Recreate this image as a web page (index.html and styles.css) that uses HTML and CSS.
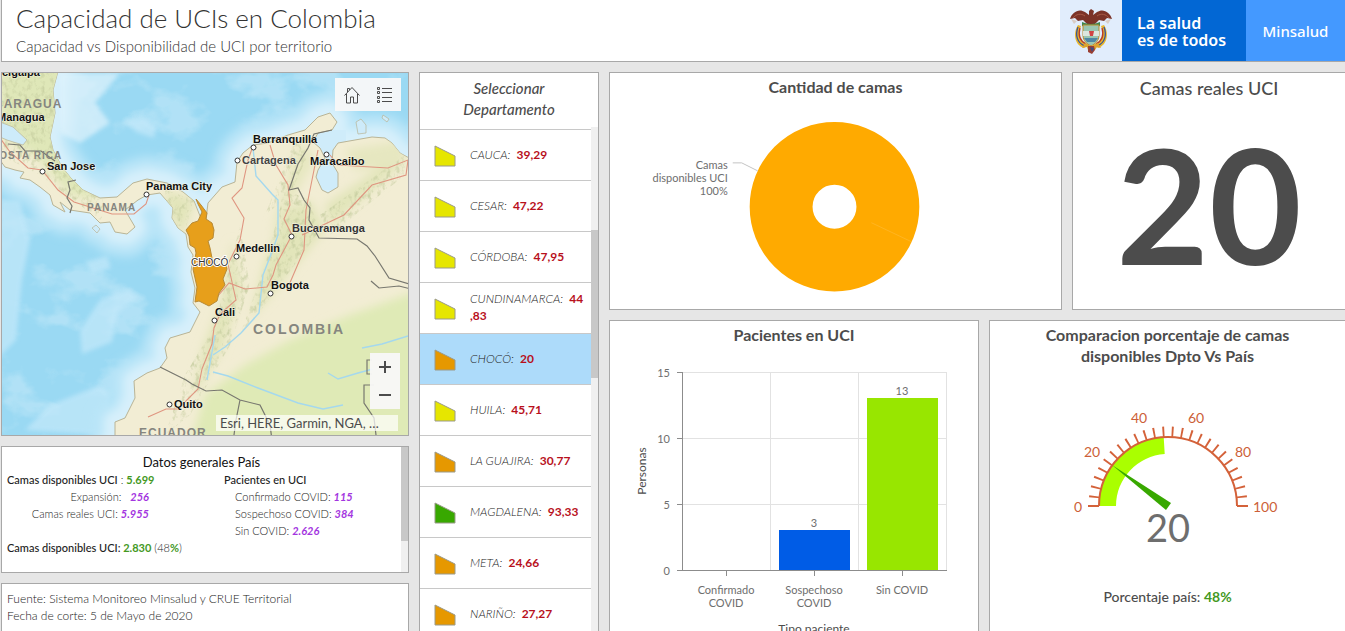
FILE: index.html
```html
<!DOCTYPE html>
<html lang="es">
<head>
<meta charset="utf-8">
<title>Capacidad de UCIs en Colombia</title>
<link rel="stylesheet" href="styles.css">
</head>
<body>
<header class="header">
  <div class="header-text">
    <h1>Capacidad de UCIs en Colombia</h1>
    <p>Capacidad vs Disponibilidad de UCI por territorio</p>
  </div>
  <div class="brand">
    <div class="brand-crest">
      <svg width="42" height="46" viewBox="0 0 42 46" aria-label="Escudo de Colombia">
        <path d="M8 17C3 24 4 37 14 40l4-4C10 34 8 25 11 18zM34 17c5 7 4 20-6 23l-4-4c8-2 10-11 7-18z" fill="#e9b62c"/>
        <path d="M8 19c-3 8-1 16 7 19M34 19c3 8 1 16-7 19" fill="none" stroke="#35539a" stroke-width="1.300"/>
        <path d="M10 20c-2 7 0 13 6 16M32 20c2 7 0 13-6 16" fill="none" stroke="#b63a2e" stroke-width="1.300"/>
        <path d="M0 11C2 4 9 0 15 4l4 3V3l2-2 3 2-1 4 4-3c6-4 13 0 15 7l-5-1-3 3-5-1-4 4H17l-4-4-5 1-3-3z" fill="#7c3328"/>
        <path d="M3 10c3-4 8-5 12-2M39 10c-3-4-8-5-12-2" stroke="#a85a46" fill="none"/>
        <path d="M1 11l6 2-3 3zM41 11l-6 2 3 3z" fill="#d9cdc6"/>
        <path d="M12 14q9 4 18 0v4q-9 3-18 0z" fill="#3d8650"/>
        <path d="M13 17h16v10c0 6-4 9-8 11-4-2-8-5-8-11z" fill="#9ac6b2" stroke="#bd8a2c"/>
        <path d="M13 23h16v5H13z" fill="#dce6df"/>
        <path d="M19 23h5l-1 5h-3z" fill="#cf4444"/>
        <path d="M14 30h14l-3 4h-8z" fill="#4f86a4"/>
        <path d="M15 35l-3 5 5-1 1 3 4-3 3 3 2-3 4 1-3-5-7 3z" fill="#dca32d"/>
        <path d="M18 38h6l1 4-3 4-4-2z" fill="#9a3e31"/>
        <path d="M20 39l4 1-2 4z" fill="#3a4e86"/>
      </svg>
    </div>
    <div class="brand-slogan">La salud<br>es de todos</div>
    <div class="brand-name">Minsalud</div>
  </div>
</header>

<main class="board">
  <div class="col-left">
    <section class="panel map" aria-label="Mapa">
      <svg class="map-canvas" viewBox="2 73 406 362" preserveAspectRatio="xMidYMid slice">
        <defs>
          <filter id="soft" x="-20%" y="-20%" width="140%" height="140%"><feGaussianBlur stdDeviation="5"/></filter>
          <filter id="fade" x="-20%" y="-20%" width="140%" height="140%"><feGaussianBlur stdDeviation="2"/></filter>
          <filter id="relief" x="0" y="0" width="100%" height="100%">
            <feTurbulence type="fractalNoise" baseFrequency="0.22 0.16" numOctaves="3" seed="4"/>
            <feColorMatrix values="0 0 0 0 .55  0 0 0 0 .6  0 0 0 0 .34  3 0 0 0 -1.45"/>
            <feComposite in2="SourceGraphic" operator="in"/>
          </filter>
          <filter id="depth" x="0" y="0" width="100%" height="100%">
            <feTurbulence type="fractalNoise" baseFrequency="0.02 0.03" numOctaves="4" seed="9"/>
            <feColorMatrix values="0 0 0 0 .79  0 0 0 0 .92  0 0 0 0 .98  5 0 0 0 -2.6"/>
          </filter>
          <path id="land" d="M0 60H61L53 90 55 113 50 137 53 150 62 167 70 177 83 190 100 198 117 197 133 183 147 179 167 183 183 192 194 201 200 216 206 219 208 203 222 187 235 182 237 162 243 153 253 145 268 143 288 135 305 130 318 117 330 113 337 122 332 130 318 133 313 142 320 148 325 158 318 170 316 177 322 190 328 193 338 187 338 173 332 163 333 150 338 143 355 140 372 137 385 138 392 143 400 153 420 164V450H110L115 435 115 422 125 418 130 408 135 398 134 381 147 373 160 368 167 358 165 348 170 338 190 332 196 320 200 312 193 303 195 288 191 272 193 255 188 247 186 234 178 228 172 218 173 208 160 193 147 195 138 200 125 210 135 227 127 234 115 232 110 222 100 223 90 213 70 210 60 202 65 212 53 205 50 195 40 187 30 180 20 178 24 172 15 170 5 167 0 160z"/>
          <clipPath id="landclip"><use href="#land"/></clipPath>
        </defs>
        <rect width="420" height="450" fill="#9ad9f3"/>
        <rect width="420" height="450" filter="url(#depth)" opacity=".3"/>
        <g fill="#c4e9fa" filter="url(#fade)" opacity=".7">
          <path d="M124 120l20-2 12 10-2 10-18-6zM80 330l20-30 30-12 8 10-20 14-6 30-30 12zM25 430l25-25 50-20 12 10-10 40z"/>
          <path d="M85 262l22-6 4 12-18 6zM0 200h20l10 40-8 40-6 60-20 20z"/>
        </g>
        <g fill="none" stroke-linejoin="round" filter="url(#soft)">
          <use href="#land" stroke="#b9e5f8" stroke-width="46"/>
          <use href="#land" stroke="#d7f0fb" stroke-width="22"/>
        </g>
        <path d="M60 73h60l-25 30 15 20-30 20-20-10z" fill="#e0f3fc" opacity=".7" filter="url(#fade)"/>
        <path d="M316 130h30v60h-30z" fill="#cfecfa"/>
        <use href="#land" fill="#f2edd4" stroke="#b9b496"/>
        <g clip-path="url(#landclip)">
          <g filter="url(#soft)">
            <path d="M0 60h70v100l30 40-30-5-35-40-35-20z" fill="#dfe7b8"/>
            <path d="M420 290l-70 25-60 25-45 25-40 30-15 50h230z" fill="#dfeab6"/>
            <path d="M165 190l30 10-12 35-15-20zM232 240l10 50-20 60-30 50 10-50 20-50zM285 210l25-10 15 30-45 55-30 35 15-60zM325 205l80-55v12l-75 65z" fill="#e2e5ba"/>
            <path d="M345 150l60-10v25l-50 5zM300 140l15 20-20 35-25 40 15-50z" fill="#e6e7c0"/>
          </g>
          <path d="M0 60h60v110l50 35-10 15-60-45-40-20zM165 190l30 10-12 35-15-20zM240 225l10 60-20 60-40 70-25 20 20-60 30-50zM285 190l25 10 10 30-55 75-25 30 25-70zM320 215l85-60v20l-75 60zM295 140l15 10-20 45-25 20z" filter="url(#relief)" opacity=".75"/>
        </g>
        <path d="M0 122l13 5 14 13-4 5-16-5-7-3zM356 122l5-3 5 6v8l-8 1zM92 228l4-3 4 4-3 4zM383 115l6 4-2 3-5-4z" fill="#cdebfa" stroke="#b9b496" stroke-width=".7"/>
        <g fill="none" stroke="#a4d8ee" stroke-width="1.4">
          <path d="M253 148l3 28 16 18 6 6v35l-8 22-7 18-4 38-18 20-16 14-12 8M213 372l15 4 30 12 40 15 25 6 20-4M328 373l10 6 20-6 15-4M362 348l20-4 26-8M215 335l-8 45"/>
        </g>
        <g fill="none" stroke="#df9580" stroke-width="1.1">
          <path d="M0 138l10 14 18 16 14 2 16 20 16 12 38 12h22l12-10 3-9M253 146l-5 14-6 28-10 10 12 20-4 22-12 24 8 36-16 14-6 14-2 16-10 25-4 20-20 20h-12l-18 8M270 145l6 20 12 20 2 20-6 14 8 16-16 30-3 10-6 12-22 2-16-6-12 14M330 155l8 10 50 3 20-8-2 15-34 10-28 30-42 20M318 150l-12 60-2 40-15 35"/>
        </g>
        <g fill="none" stroke="#77776f" stroke-width="1.2">
          <path d="M8 144l12 1 5 6h16l14 10M76 180l-8 2 2 8-3 8 5 8-2 7M332 130l-18 4-6 14-10 16-9 26 9-2 6 12 6 8-1 12 10 18 38 1 10 7 8 10 14 22 20 6 6 6-16-4-20 2-8-7M160 367l12 6 14 7 6 4 14 7 16-1 18 10 20 5 10 20 2 15M240 400l-4 20-2 15M372 360h-5v14h5M374 385h-10v18l10 15 2 17"/>
        </g>
        <path d="M196 199l5 6 6 8-1 6 6 4 2 7-1 8-5 3 2 7 2 10 1 8 13-1 1 4-4 10 2 6-6 8-2 8-8 5-10-5-4 1 2-15-4-18 3-16-1-5-5-3-1-9-3-6 6-7 6-2 4-9-4-8z" fill="#e79f1b" stroke="#b78a36"/>
        <g fill="#fff" stroke="#333" stroke-width="1">
          <circle cx="42.500" cy="171.500" r="2.500"/><circle cx="146.500" cy="194.500" r="2.500"/><circle cx="253.500" cy="147.500" r="2.500"/><circle cx="237.500" cy="160.500" r="2.500"/><circle cx="326.500" cy="154.500" r="2.500"/><circle cx="291.500" cy="236.500" r="2.500"/><circle cx="236.500" cy="256.500" r="2.500"/><circle cx="270.500" cy="293.500" r="2.500"/><circle cx="214.500" cy="320.500" r="2.500"/><circle cx="169.500" cy="404.500" r="2.500"/>
        </g>
        <g class="map-country">
          <text x="-6" y="108">CARAGUA</text><text x="-9" y="159" class="country-small">COSTA RICA</text><text x="87" y="211" class="country-small">PANAMA</text>
          <text x="253" y="334" class="country-large">COLOMBIA</text><text x="139" y="437">ECUADOR</text>
        </g>
        <g class="map-city">
          <text x="2" y="76">cigalpa</text><text x="-3" y="121">Managua</text><text x="47" y="170">San Jose</text><text x="146" y="190">Panama City</text>
          <text x="253" y="143">Barranquilla</text><text x="242" y="164" fill="#444">Cartagena</text><text x="310" y="165">Maracaibo</text>
          <text x="292" y="232" fill="#333">Bucaramanga</text><text x="236" y="252">Medellin</text><text x="271" y="289">Bogota</text><text x="215" y="316">Cali</text><text x="174" y="408">Quito</text>
        </g>
        <text class="map-region" x="191" y="266">CHOCÓ</text>
      </svg>
      <div class="map-tools">
        <button type="button" aria-label="Inicio"><svg width="18" height="18" viewBox="0 0 18 18"><path d="M1.500 9.500L9 1.500l7.500 8M3.500 8v9h4v-6h3v6h4V8M4.500 6V2.500h2V4" fill="none" stroke="#4c4c4c"/></svg></button>
        <button type="button" aria-label="Leyenda"><svg width="18" height="18" viewBox="0 0 18 18"><path d="M6 2.500h10M6 6.500h10M6 11.500h10M6 15.500h10" stroke="#4c4c4c"/><path d="M1.500 1.500h2v2h-2zM1.500 5.500h2v2h-2zM1.500 10.500h2v2h-2zM1.500 14.500h2v2h-2z" fill="none" stroke="#4c4c4c"/></svg></button>
      </div>
      <div class="map-zoom">
        <button type="button" aria-label="Acercar"><svg width="14" height="14" viewBox="0 0 14 14"><path d="M1 7h12M7 1v12" stroke="#4c4c4c" stroke-width="2"/></svg></button>
        <button type="button" aria-label="Alejar"><svg width="14" height="14" viewBox="0 0 14 14"><path d="M1 7h12" stroke="#4c4c4c" stroke-width="2"/></svg></button>
      </div>
      <div class="map-credit">Esri, HERE, Garmin, NGA, …</div>
    </section>

    <section class="panel facts">
      <div class="facts-body">
        <h2>Datos generales País</h2>
        <div class="facts-cols">
          <div class="facts-beds">
            <p><b>Camas disponibles UCI</b> : <b class="green">5.699</b></p>
            <p>Expansión: &nbsp; <i>256</i></p>
            <p>Camas reales UCI: <i>5.955</i></p>
          </div>
          <div class="facts-patients">
            <p><b>Pacientes en UCI</b></p>
            <p class="indent">Confirmado COVID: <i>115</i></p>
            <p class="indent">Sospechoso COVID: <i>384</i></p>
            <p class="indent">Sin COVID: <i>2.626</i></p>
          </div>
        </div>
        <p><b>Camas disponibles UCI: <span class="green">2.830</span></b> (48<b class="green">%</b>)</p>
      </div>
      <div class="scroll"><div class="thumb thumb-facts"></div></div>
    </section>

    <section class="panel source">
      <p>Fuente: Sistema Monitoreo Minsalud y CRUE Territorial</p>
      <p>Fecha de corte: 5 de Mayo de 2020</p>
    </section>
  </div>

  <section class="panel list">
    <h2>Seleccionar Departamento</h2>
    <div class="list-body">
      <ul>
        <li><button type="button"><svg class="mark yellow" viewBox="0 0 22 22"><path d="M1 1l20 10v10H1z"/></svg><span><em>CAUCA:</em> <b>39,29</b></span></button></li>
        <li><button type="button"><svg class="mark yellow" viewBox="0 0 22 22"><path d="M1 1l20 10v10H1z"/></svg><span><em>CESAR:</em> <b>47,22</b></span></button></li>
        <li><button type="button"><svg class="mark yellow" viewBox="0 0 22 22"><path d="M1 1l20 10v10H1z"/></svg><span><em>CÓRDOBA:</em> <b>47,95</b></span></button></li>
        <li><button type="button"><svg class="mark yellow" viewBox="0 0 22 22"><path d="M1 1l20 10v10H1z"/></svg><span><em>CUNDINAMARCA:</em> <b>44<br>,83</b></span></button></li>
        <li><button type="button" class="selected" aria-pressed="true"><svg class="mark orange" viewBox="0 0 22 22"><path d="M1 1l20 10v10H1z"/></svg><span><em>CHOCÓ:</em> <b>20</b></span></button></li>
        <li><button type="button"><svg class="mark yellow" viewBox="0 0 22 22"><path d="M1 1l20 10v10H1z"/></svg><span><em>HUILA:</em> <b>45,71</b></span></button></li>
        <li><button type="button"><svg class="mark orange" viewBox="0 0 22 22"><path d="M1 1l20 10v10H1z"/></svg><span><em>LA GUAJIRA:</em> <b>30,77</b></span></button></li>
        <li><button type="button"><svg class="mark dark-green" viewBox="0 0 22 22"><path d="M1 1l20 10v10H1z"/></svg><span><em>MAGDALENA:</em> <b>93,33</b></span></button></li>
        <li><button type="button"><svg class="mark orange" viewBox="0 0 22 22"><path d="M1 1l20 10v10H1z"/></svg><span><em>META:</em> <b>24,66</b></span></button></li>
        <li><button type="button"><svg class="mark orange" viewBox="0 0 22 22"><path d="M1 1l20 10v10H1z"/></svg><span><em>NARIÑO:</em> <b>27,27</b></span></button></li>
      </ul>
      <div class="scroll"><div class="thumb thumb-list"></div></div>
    </div>
  </section>

  <div class="col-right">
    <div class="row row-top">
      <section class="panel card">
        <h2>Cantidad de camas</h2>
        <svg class="chart chart-donut" viewBox="0 0 452 204">
          <circle cx="225" cy="106" r="53.500" fill="none" stroke="#ffaa00" stroke-width="63"/>
          <path d="M262 122l40 19" stroke="#ffb92e" stroke-width=".7"/>
          <path d="M123 62h9l16 8" fill="none" stroke="#c4c4c4"/>
          <g class="axis-text" text-anchor="end"><text x="118" y="68">Camas</text><text x="118" y="81">disponibles UCI</text><text x="118" y="94">100%</text></g>
        </svg>
      </section>
      <section class="panel card card-edge">
        <h2 class="wide-title">Camas reales UCI</h2>
        <div class="big-number">20</div>
      </section>
    </div>
    <div class="row row-bottom">
      <section class="panel card card-open">
        <h2>Pacientes en UCI</h2>
        <svg class="chart chart-bars" viewBox="0 0 368 300">
          <path d="M72 27.500h265M72 93.500h265M72 159.500h265M160.500 27v198M248.500 27v198M336.500 27v198" stroke="#e2e2e2" fill="none"/>
          <rect x="169" y="185" width="71" height="41" fill="#005ce6"/>
          <rect x="257" y="53" width="71" height="173" fill="#98e600"/>
          <path d="M72.500 27v199M67 27.500h5M67 93.500h5M67 159.500h5M67 225.500h270M116.500 226v5M204.500 226v5M292.500 226v5" stroke="#8c8c8c" fill="none"/>
          <g class="axis-text" text-anchor="end"><text x="60" y="32">15</text><text x="60" y="98">10</text><text x="60" y="164">5</text><text x="60" y="230">0</text></g>
          <g class="axis-text" text-anchor="middle">
            <text x="204" y="182">3</text><text x="292" y="50">13</text>
            <text x="116" y="249">Confirmado</text><text x="116" y="262">COVID</text>
            <text x="204" y="249">Sospechoso</text><text x="204" y="262">COVID</text>
            <text x="292" y="249">Sin COVID</text>
          </g>
          <g class="axis-title" text-anchor="middle"><text x="204" y="288">Tipo paciente</text><text transform="translate(36 126) rotate(-90)">Personas</text></g>
        </svg>
      </section>
      <section class="panel card card-edge card-open gauge">
        <h2>Comparacion porcentaje de camas disponibles Dpto Vs País</h2>
        <svg class="chart-gauge" viewBox="-110 -100 220 144">
          <path d="M-69 0A69 69 0 0 1-4.300-68.900L-3.300-51.900A52 52 0 0 0-52 0z" fill="#aaff00"/>
          <path d="M-69 0A69 69 0 0 1 69 0" fill="none" stroke="#d4623a" stroke-width="2"/>
          <path d="M-74 0A74 74 0 0 1 74 0" fill="none" stroke="#d4623a" stroke-width="11" pathLength="1000" stroke-dasharray="8 32" stroke-dashoffset="4"/>
          <path d="M-80 0h11M69 0h11" stroke="#d4623a" stroke-width="2"/>
          <path d="M-56-41L3-3-2 4z" fill="#38a800"/>
          <g class="gauge-text"><text x="-94" y="6">0</text><text x="-84" y="-49">20</text><text x="-37" y="-83">40</text><text x="20" y="-83">60</text><text x="67" y="-49">80</text><text x="85" y="6">100</text></g>
          <text class="gauge-value" x="0" y="36" text-anchor="middle">20</text>
        </svg>
        <p class="gauge-note">Porcentaje país: <b class="green">48%</b></p>
      </section>
    </div>
  </div>
</main>
</body>
</html>
```
FILE: styles.css
```css
* { box-sizing: border-box; }

body {
  margin: 0;
  height: 100vh;
  display: flex;
  flex-direction: column;
  overflow: hidden;
  background: #e6e6e6;
  color: #4c4c4c;
  font-family: Lato, "Open Sans", sans-serif;
}

h1, h2, p, ul { margin: 0; padding: 0; font-weight: 400; }
ul { list-style: none; }
button { border: 0; padding: 0; background: none; font: inherit; color: inherit; cursor: pointer; }

.header {
  height: 62px;
  flex: none;
  display: flex;
  justify-content: space-between;
  margin-left: 1px;
  background: #fff;
  border-left: 1px solid #a8a8a8;
  border-bottom: 1px solid #a8a8a8;
}
.header-text { padding: 3px 14px; color: #333; }
.header h1 { font-size: 26px; line-height: 31px; font-weight: 300; }
.header p { font-size: 15px; line-height: 24px; font-weight: 300; }

.brand { display: flex; color: #fff; }
.brand-crest { width: 62px; display: flex; align-items: center; justify-content: center; background: #e1edfc; }
.brand-slogan {
  width: 124px;
  padding: 15px 0 0 15px;
  background: #0267d4;
  font: 600 16px/17px "Noto Sans", sans-serif;
}
.brand-name {
  width: 99px;
  display: flex;
  align-items: center;
  justify-content: center;
  background: #4499ff;
  font: 500 15px/16px "Noto Sans", sans-serif;
}

.board {
  flex: 1;
  min-height: 0;
  display: grid;
  grid-template-columns: minmax(0, 408fr) minmax(0, 180fr) minmax(0, 736fr);
  gap: 10px;
  padding: 10px 0 0 1px;
}
.panel { background: #fff; border: 1px solid #a8a8a8; overflow: hidden; min-width: 0; min-height: 0; }

.col-left { display: grid; grid-template-rows: minmax(0, 1fr) 127px 48px; gap: 10px; min-height: 0; }

.map { position: relative; }
.map-canvas { display: block; width: 100%; height: 100%; }
.map-city { font: 700 11px "Liberation Sans", sans-serif; fill: #111; paint-order: stroke; stroke: #f6f4e4; stroke-width: 1px; }
.map-country { font: 700 12px "Liberation Sans", sans-serif; letter-spacing: 1px; fill: #85857f; }
.country-small { font-size: 10px; }
.country-large { font-size: 14px; letter-spacing: 2px; }
.map-region { font: 10px "Liberation Sans", sans-serif; fill: #333; paint-order: stroke; stroke: #fff; stroke-width: 2px; }
.map-tools, .map-zoom { position: absolute; display: flex; background: rgba(248, 248, 248, 0.95); }
.map-tools { top: 5px; right: 7px; }
.map-tools button { width: 33px; height: 33px; display: grid; place-items: center; }
.map-zoom { right: 8px; bottom: 26px; flex-direction: column; }
.map-zoom button { width: 30px; height: 28px; display: grid; place-items: center; }
.map-credit {
  position: absolute;
  right: 10px;
  bottom: 4px;
  width: 182px;
  padding-left: 4px;
  background: rgba(255, 255, 255, 0.7);
  font-size: 13px;
  line-height: 16px;
  white-space: nowrap;
}

.scroll { width: 7px; flex: none; background: #f0f0f0; }
.thumb { background: #c8c8c8; }
.thumb-facts { height: 94px; }
.thumb-list { height: 148px; margin-top: 103px; }

.green { color: #44991f; }
.facts { display: flex; justify-content: space-between; }
.facts-body { flex: 1; padding: 6px 5px; font-size: 11px; line-height: 17px; white-space: nowrap; }
.facts h2 { font-size: 13px; line-height: 18px; text-align: center; color: #111; }
.facts p { font-weight: 300; color: #222; }
.facts b { font-weight: 500; }
.facts .green { color: #44991f; font-weight: 700; }
.facts i { color: #a335e0; font-weight: 700; }
.facts-cols { display: grid; grid-template-columns: 142px 1fr; column-gap: 75px; }
.facts-beds { text-align: right; }
.indent { padding-left: 11px; }

.source { padding: 6px 5px; border-bottom: 0; font-size: 12px; line-height: 17px; font-weight: 300; color: #222; white-space: nowrap; }
.source p { font-weight: 300; }

.list { display: flex; flex-direction: column; border-bottom: 0; }
.list h2 { padding: 5px 35px 7px; flex: none; font-size: 15px; line-height: 21px; font-style: italic; font-weight: 500; text-align: center; }
.list-body { flex: 1; min-height: 0; display: flex; overflow: hidden; }
.list-body ul { flex: 1; padding-top: 2px; }
.list-body .scroll { align-self: stretch; }
.list li { height: 51px; border-top: 1px solid #c8c8c8; }
.list li button {
  width: 100%;
  height: 100%;
  display: flex;
  align-items: center;
  gap: 14px;
  padding: 0 0 2px 14px;
  font-size: 12px;
  line-height: 17px;
  text-align: left;
  white-space: nowrap;
}
.list .selected { background: #addbfa; }
.list em { font-weight: 300; color: #222; }
.list b { margin-left: 3px; color: #b8101c; font-weight: 700; }
.mark { width: 22px; height: 22px; flex: none; margin-top: 3px; stroke: #9a9a8a; stroke-width: 1; }
.yellow { fill: #e6e600; }
.orange { fill: #e69800; }
.dark-green { fill: #38a800; }

.col-right { display: grid; grid-template-rows: minmax(0, 238fr) minmax(0, 311fr); gap: 10px; min-height: 0; }
.row { display: grid; gap: 10px; min-height: 0; }
.row-top { grid-template-columns: minmax(0, 453fr) minmax(0, 273fr); }
.row-bottom { grid-template-columns: minmax(0, 370fr) minmax(0, 356fr); }
.card-edge { border-right: 0; }
.card-open { border-bottom: 0; }
.card { display: flex; flex-direction: column; align-items: center; }
.card h2 { padding-top: 3px; font-size: 16px; line-height: 21px; font-weight: 700; text-align: center; flex: none; }
.card .wide-title { font-size: 18px; font-weight: 500; line-height: 25px; }
.big-number { flex: 1; display: flex; align-items: center; padding-bottom: 4px; font-size: 160px; line-height: 160px; font-weight: 700; }

.chart { width: 100%; flex: none; }
.chart-donut { margin-top: 4px; }
.axis-text { font-size: 11px; fill: #6e6e6e; }
.axis-title { font-size: 12px; fill: #4c4c4c; }
.gauge h2 { padding-left: 40px; padding-right: 40px; }
.chart-gauge { width: 220px; flex: none; margin-top: 40px; }
.gauge-text { font-size: 14px; fill: #cc5f38; }
.gauge-value { font-size: 38px; fill: #6e6e6e; }
.gauge-note { margin-top: 36px; font-size: 14px; line-height: 22px; font-weight: 500; }
.gauge-note b { font-weight: 700; }
```
